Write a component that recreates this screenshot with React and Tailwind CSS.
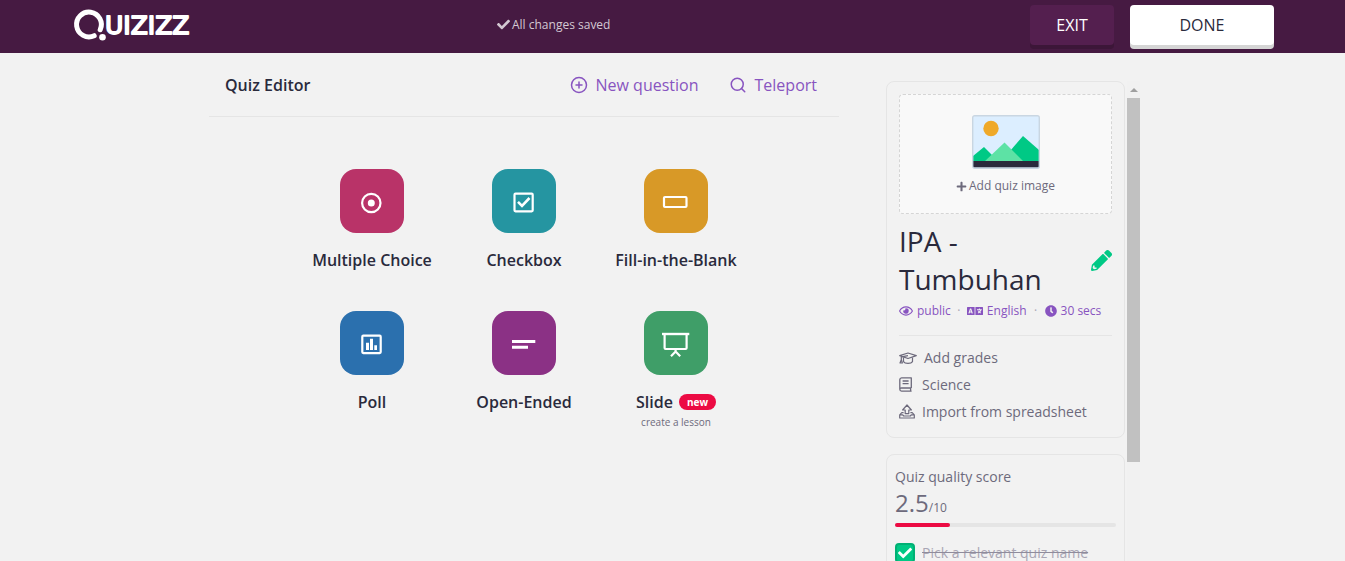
import { useState } from 'react';
import {
  FaCheck,
  FaClock,
  FaLanguage,
  FaPlus,
  FaRegEye,
} from 'react-icons/fa';
import { CirclePlus, Search } from 'lucide-react';

const Logo = () => (
  <svg width="120" height="34" viewBox="0 0 120 34" aria-label="Quizizz">
    <path
      d="M27.2 21.7 A12.4 12.4 0 1 0 21.2 27.7"
      fill="none"
      stroke="#fff"
      strokeWidth="5"
      strokeLinecap="round"
    />
    <circle cx="29.5" cy="29.3" r="3.3" fill="#fff" />
    <text
      x="32"
      y="25.7"
      fill="#fff"
      stroke="#fff"
      strokeWidth="1.8"
      strokeLinejoin="round"
      className="font-['DejaVu_Sans',sans-serif] text-[25px]"
    >
      UIZIZZ
    </text>
  </svg>
);

const RadioIcon = () => (
  <>
    <circle cx="13.3" cy="14" r="9.2" />
    <circle cx="13.3" cy="14" r="3.5" fill="currentColor" stroke="none" />
  </>
);

const CheckboxIcon = () => (
  <>
    <rect x="4.5" y="4.7" width="18.2" height="17.6" rx="1" />
    <path d="M8 12.8 L12 16.8 L19.5 9" strokeWidth="2.6" />
  </>
);

const BlankIcon = () => <rect x="2" y="8" width="22.5" height="10" rx="1" />;

const PollIcon = () => (
  <>
    <rect x="4.3" y="4.7" width="18.4" height="17.4" rx="1" />
    <path
      d="M8 11.7h3V19H8zM12 7.7h3V19h-3zM16.3 14.3h2.7V19h-2.7z"
      fill="currentColor"
      stroke="none"
    />
  </>
);

const OpenEndedIcon = () => (
  <path
    d="M2 9h23.3v3H2zM2 14.8h16v3H2z"
    fill="currentColor"
    stroke="none"
  />
);

const SlideIcon = () => (
  <>
    <path d="M0 3h27.3" strokeWidth="2.4" />
    <path d="M2.6 3.5V17a1 1 0 0 0 1 1h20a1 1 0 0 0 1-1V3.5M13.6 18v2.5M9 25.2l4.6-4.7 4.6 4.7" />
  </>
);

const questionTypes = [
  { name: 'Multiple Choice', color: 'bg-[#b93368]', icon: RadioIcon },
  { name: 'Checkbox', color: 'bg-[#2595a1]', icon: CheckboxIcon },
  { name: 'Fill-in-the-Blank', color: 'bg-[#d89927]', icon: BlankIcon },
  { name: 'Poll', color: 'bg-[#2b70ae]', icon: PollIcon },
  { name: 'Open-Ended', color: 'bg-[#8b3185]', icon: OpenEndedIcon },
  {
    name: 'Slide',
    color: 'bg-[#3f9e68]',
    icon: SlideIcon,
    isNew: true,
    hint: 'create a lesson',
  },
];

const QuestionType = ({ type }) => {
  const Icon = type.icon;
  return (
    <button type="button" className="flex h-[142px] flex-col items-center">
      <span
        className={`flex size-16 items-center justify-center rounded-2xl pt-1 text-white ${type.color}`}
      >
        <svg
          width="28"
          height="28"
          viewBox="0 0 28 28"
          fill="none"
          stroke="currentColor"
          strokeWidth="2.2"
        >
          <Icon />
        </svg>
      </span>
      <span className="mt-[15px] flex items-center gap-1.5 text-base font-semibold whitespace-nowrap text-[#2a2a3c]">
        {type.name}
        {type.isNew && (
          <span className="h-4 rounded-full bg-[#ec0b43] px-2 text-[10px] leading-4 font-bold text-white">
            new
          </span>
        )}
      </span>
      {type.hint && (
        <span className="text-[10px] leading-4 text-[#6d6a7c]">
          {type.hint}
        </span>
      )}
    </button>
  );
};

const Picture = () => (
  <svg width="68" height="54" viewBox="0 0 68 54">
    <rect x="1" y="1" width="66" height="52" rx="2" fill="#dceeff" />
    <circle cx="19" cy="13.5" r="7.7" fill="#efa929" />
    <path d="M1 41 L12 32 L20 40 L20 47 L1 47z" fill="#00c985" />
    <path d="M38 36 L51 21 L67 35 L67 47 L38 47z" fill="#00c985" />
    <path d="M12 47 L32.5 27.5 L52 47z" fill="#5de2a5" />
    <path d="M1 46h66v6.5H1z" fill="#2a2a3c" />
    <rect
      x="0.7"
      y="0.7"
      width="66.6"
      height="52.6"
      rx="2"
      fill="none"
      stroke="#c9d6e2"
      strokeWidth="1.4"
    />
  </svg>
);

const PencilIcon = () => (
  <svg width="21" height="21" viewBox="0 0 512 512" fill="currentColor">
    <path d="M498 142l-46 46c-5 5-12 5-17 0L324 77c-5-5-5-12 0-17l46-46c19-19 49-19 68 0l60 60c19 19 19 49 0 68z" />
    <path
      fillRule="evenodd"
      d="M284 100L22 362 .4 484c-3 16 11 31 28 28l121-22 263-262c5-5 5-12 0-17L301 100c-5-5-12-5-17 0zM88 424h48v36l-64 12-32-32 12-64h36z"
    />
  </svg>
);

const GradesIcon = () => (
  <svg
    width="18"
    height="14"
    viewBox="0 0 18 14"
    fill="none"
    stroke="currentColor"
    strokeWidth="1.2"
    strokeLinejoin="round"
  >
    <path d="M.7 4.6 L9 2 L17.3 4.6 L9 7.5z" />
    <path d="M4.5 6.4v4.2C5.2 11.8 7 12.4 9 12.4s3.8-.6 4.5-1.8V6.4M9 4.7 L2.3 5.8V8.6L1 12h2.4L2.3 8.6" />
  </svg>
);

const BookIcon = () => (
  <svg
    width="14"
    height="15"
    viewBox="0 0 14 15"
    fill="none"
    stroke="currentColor"
    strokeWidth="1.3"
    strokeLinejoin="round"
  >
    <path d="M12.3 11V.8H2.6A1.9 1.9 0 0 0 .8 2.6v9.6a1.9 1.9 0 0 0 1.8 1.9h10M.8 12.4A1.6 1.6 0 0 1 2.6 11h9.7M11.6 11v3" />
    <path d="M3.6 4h6M3.6 6.6h6" />
  </svg>
);

const ImportIcon = () => (
  <svg
    width="16"
    height="15"
    viewBox="0 0 16 15"
    fill="none"
    stroke="currentColor"
    strokeWidth="1.2"
    strokeLinejoin="round"
  >
    <path d="M6.2 9.6V6H3.6L8 1l4.4 5H9.8v3.6z" />
    <path d="M4.6 8.6H2.8L.7 10.8V14h14.6v-3.2l-2.1-2.2h-1.8M.9 10.8h2.8l1 1.2h6.6l1-1.2h2.8" />
  </svg>
);

const Header = () => (
  <header className="bg-[#461a42]">
    <div className="mx-auto flex h-[53px] max-w-[1203px] items-start pl-0.5">
      <a href="#home" className="mt-2 shrink-0">
        <Logo />
      </a>
      <p className="ml-76 flex h-[49px] items-center gap-0.5 text-xs text-[#d3c8d2]">
        <FaCheck className="size-[13px]" />
        All changes saved
      </p>
      <div className="mt-[5px] ml-auto flex gap-4 text-base text-white">
        <button
          type="button"
          className="h-10 w-[84px] rounded bg-[#541f4f] shadow-[0_4px_0_#3c1638]"
        >
          EXIT
        </button>
        <button
          type="button"
          className="h-10 w-36 rounded bg-white text-[#2a2a3c] shadow-[0_4px_0_#d5d5d5]"
        >
          DONE
        </button>
      </div>
    </div>
  </header>
);

const QuizCard = () => (
  <section className="rounded-lg border border-[#e5e5e5] p-3">
    <button
      type="button"
      className="flex h-[120px] w-full flex-col items-center rounded border border-dashed border-[#d5d5d5] bg-[#f9f9f9] pt-5 text-xs text-[#6d6a7c]"
    >
      <Picture />
      <span className="mt-[9px] flex items-center gap-0.5">
        <FaPlus className="size-[11px]" />
        Add quiz image
      </span>
    </button>

    <div className="mt-2 flex items-center justify-between">
      <h1 className="w-[150px] text-[28px] leading-[38px] text-[#2a2a3c]">
        IPA - Tumbuhan
      </h1>
      <button type="button" aria-label="Edit quiz" className="text-[#00c985]">
        <PencilIcon />
      </button>
    </div>

    <ul className="mt-[3px] flex items-center text-xs leading-5 whitespace-nowrap text-[#8854c0]">
      <li className="flex items-center gap-1">
        <FaRegEye className="size-3.5" />
        public
      </li>
      <li className="w-4 text-center text-[#a9a6b4]">·</li>
      <li className="flex items-center gap-1">
        <FaLanguage className="size-4" />
        English
      </li>
      <li className="w-[18px] text-center text-[#a9a6b4]">·</li>
      <li className="flex items-center gap-1">
        <FaClock className="size-3" />
        30 secs
      </li>
    </ul>

    <hr className="mt-3.5 mb-2 border-[#e5e5e5]" />

    <ul className="text-sm leading-[27px] text-[#6d6a7c]">
      <li className="flex items-center gap-[7px]">
        <GradesIcon />
        Add grades
      </li>
      <li className="flex items-center gap-[9px]">
        <BookIcon />
        Science
      </li>
      <li className="flex items-center gap-[7px]">
        <ImportIcon />
        Import from spreadsheet
      </li>
    </ul>
  </section>
);

const ScoreCard = () => {
  const [named, setNamed] = useState(true);
  const score = 2.5;

  return (
    <section className="mt-4 h-60 rounded-lg border border-[#e5e5e5] px-2 pt-3 text-[#6d6a7c]">
      <h2 className="text-sm">Quiz quality score</h2>
      <p className="text-2xl leading-8">
        {score}
        <span className="text-xs">/10</span>
      </p>
      <div className="mt-1 h-1 rounded-full bg-[#e5e5e5]">
        <div
          className="h-1 rounded-full bg-[#ec0b43]"
          style={{ width: `${score * 10}%` }}
        />
      </div>
      <label className="mt-4 flex items-center gap-[7px] text-sm text-[#a9a6b4] line-through decoration-[#8f8c9c]">
        <span className="relative flex size-5">
          <input
            type="checkbox"
            checked={named}
            onChange={() => setNamed(!named)}
            className="size-5 appearance-none rounded border-2 border-[#00b074] checked:bg-[#00c985]"
          />
          {named && (
            <FaCheck className="pointer-events-none absolute top-[3px] left-[3px] size-3.5 text-white" />
          )}
        </span>
        Pick a relevant quiz name
      </label>
    </section>
  );
};

export default function App() {
  return (
    <div className="flex h-screen flex-col overflow-hidden bg-[#f2f2f2] font-['Open_Sans',sans-serif]">
      <Header />
      <div className="mx-auto flex min-h-0 w-full max-w-[935px] flex-1 pl-1">
        <main className="mr-[47px] flex-1">
          <div className="flex h-16 items-center border-b border-[#e5e5e5] pr-[22px] pl-4">
            <h2 className="text-base font-semibold text-[#2a2a3c]">
              Quiz Editor
            </h2>
            <nav className="ml-auto flex gap-[30px] text-base text-[#8854c0]">
              <button type="button" className="flex items-center gap-2">
                <CirclePlus className="size-[18px]" />
                New question
              </button>
              <button type="button" className="flex items-center gap-2">
                <Search className="size-[18px]" />
                Teleport
              </button>
            </nav>
          </div>
          <div className="mx-auto mt-[52px] grid max-w-[456px] grid-cols-3">
            {questionTypes.map((type) => (
              <QuestionType key={type.name} type={type} />
            ))}
          </div>
        </main>

        <aside className="mt-7 flex w-[254px] gap-0.5 overflow-hidden">
          <div className="w-[239px] shrink-0">
            <QuizCard />
            <ScoreCard />
          </div>
          <div className="flex flex-1 flex-col items-center bg-[#f1f1f1] pt-[7px]">
            <div className="border-x-4 border-b-4 border-x-transparent border-b-[#a0a0a0]" />
            <div className="mt-1.5 h-[364px] w-full bg-[#c1c1c1]" />
          </div>
        </aside>
      </div>
    </div>
  );
}
